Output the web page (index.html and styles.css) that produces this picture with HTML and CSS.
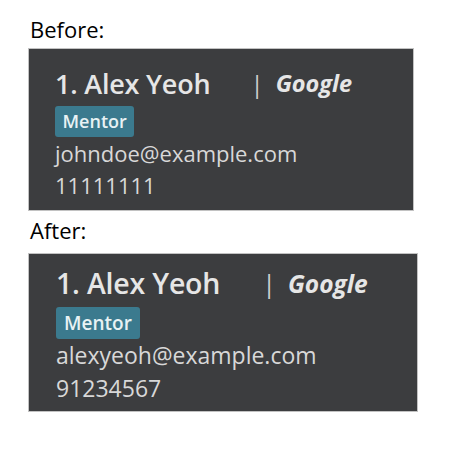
FILE: index.html
```html
<!DOCTYPE html>
<html>
<head>
<meta charset="utf-8">
<link rel="stylesheet" href="styles.css">
</head>
<body>
<div class="page">
  <div class="label">Before:</div>
  <div class="card card-before">
    <div class="title-row">
      <span class="name">1. Alex Yeoh</span>
      <span class="sep">|</span>
      <span class="company">Google</span>
    </div>
    <div class="tags"><span class="tag">Mentor</span></div>
    <div class="line">johndoe@example.com</div>
    <div class="line">11111111</div>
  </div>
  <div class="label label-after">After:</div>
  <div class="card card-after">
    <div class="title-row">
      <span class="name">1. Alex Yeoh</span>
      <span class="sep">|</span>
      <span class="company">Google</span>
    </div>
    <div class="tags"><span class="tag">Mentor</span></div>
    <div class="line">alexyeoh@example.com</div>
    <div class="line">91234567</div>
  </div>
</div>
</body>
</html>
```

FILE: styles.css
```css
html, body {
  margin: 0;
  padding: 0;
  background: #ffffff;
}
body {
  font-family: "Open Sans", "Noto Sans", sans-serif;
  color: #000;
}
.page {
  padding: 14px 0 0 28px;
  display: flex;
  flex-direction: column;
  align-items: flex-start;
}
.label {
  font-size: 22px;
  line-height: 30px;
  margin-left: 2px;
  height: 34px;
}
.label-after {
  height: 42px;
  padding-top: 4px;
  box-sizing: border-box;
}
.card {
  box-sizing: border-box;
  background: #3c3d3f;
  border: 1px solid #c2c2c2;
  display: flex;
  flex-direction: column;
  align-items: flex-start;
  color: #e6e6e6;
}
.card-before {
  width: 386px;
  height: 163px;
  padding: 12px 26px 0;
}
.card-after {
  width: 390px;
  height: 159px;
  padding: 7px 27px 0;
}
.title-row {
  display: flex;
  align-items: center;
  height: 44px;
}
.name {
  font-size: 27px;
  font-weight: 600;
  letter-spacing: -0.2px;
}
.sep {
  font-size: 24px;
  margin-left: 40px;
  color: #cfcfcf;
}
.company {
  font-size: 23.5px;
  font-weight: 700;
  font-style: italic;
  margin-left: 12px;
}
.tags {
  display: flex;
  margin: 1px 0 0;
}
.tag {
  background: #3b7a8e;
  color: #e8f2f4;
  font-size: 18px;
  font-weight: 600;
  line-height: 31px;
  padding: 0 7.5px;
  border-radius: 3px;
}
.line {
  color: #d8d8d8;
  font-size: 22px;
  line-height: 32px;
}
.card-after .name {
  font-size: 28.5px;
}
.card-after .sep {
  margin-left: 42px;
  font-size: 25px;
}
.card-after .company {
  font-size: 24.5px;
}
.card-after .tags {
  margin: 2px 0 0;
}
.card-after .tag {
  font-size: 19px;
  line-height: 32px;
  padding: 0 8px;
}
.card-after .line {
  font-size: 23px;
  line-height: 33px;
}
```
